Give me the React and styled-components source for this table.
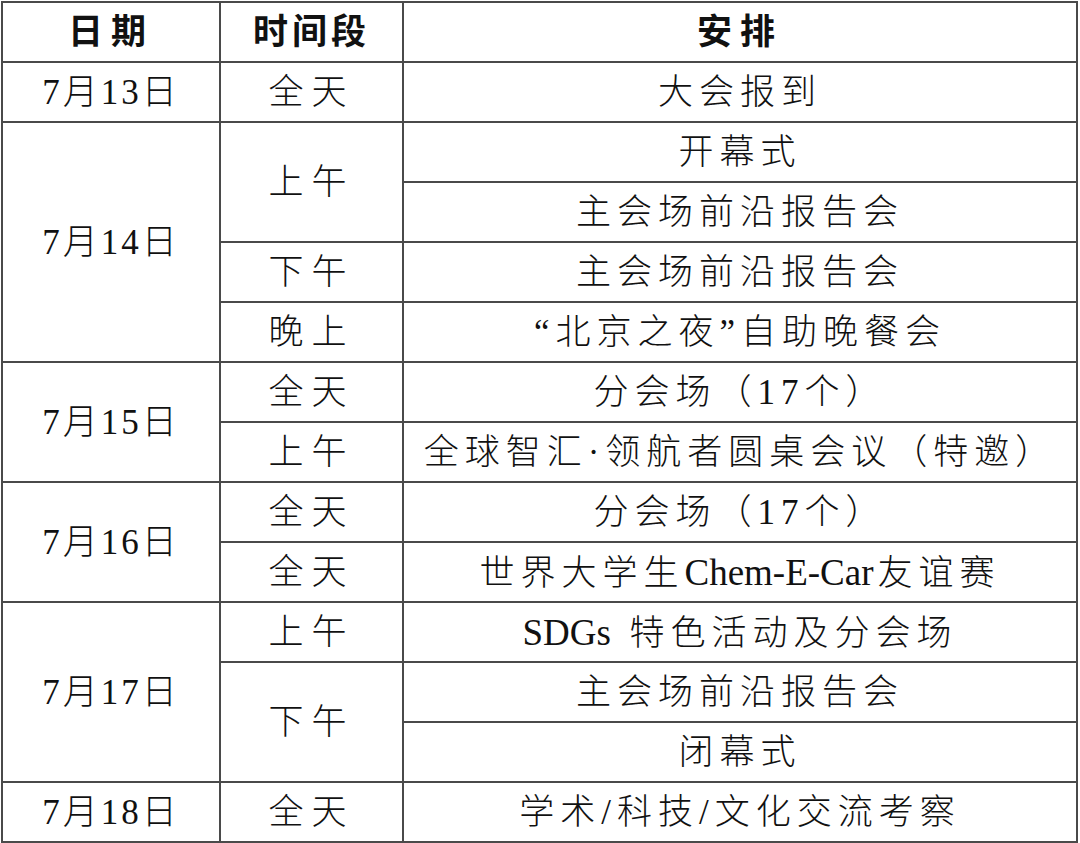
import React from 'react'
import styled, { createGlobalStyle } from 'styled-components'

const Global = createGlobalStyle`
    html, body {
        margin: 0;
        padding: 0;
        background: #ffffff;
    }
    body {
        font-family: "Liberation Serif", "Noto Sans CJK SC", serif;
        color: #111;
    }
`

const Page = styled.div`
    width: 1080px;
    height: 843px;
    padding: 1px 0 0 1px;
    box-sizing: border-box;
    overflow: hidden;
`

const Table = styled.table`
    border-collapse: collapse;
    width: 1077px;
    table-layout: fixed;
`

const Cell = styled.td`
    border: 2px solid #4a4a4a;
    height: 58px;
    padding: 0;
    text-align: center;
    vertical-align: middle;
    font-size: 35px;
    font-weight: 300;
    letter-spacing: ${p => p.$spacing || '6px'};
    line-height: 1;
    white-space: nowrap;
`

const Head = styled(Cell).attrs({ as: 'th' })`
    font-weight: 700;
    letter-spacing: ${p => p.$spacing || '8px'};
`

const Latin = styled.span`
    font-size: 37px;
    letter-spacing: 0;
    margin-right: 4px;
`

const schedule = [
    { date: '7月13日', slots: [{ time: '全天', items: ['大会报到'] }] },
    {
        date: '7月14日',
        slots: [
            { time: '上午', items: ['开幕式', '主会场前沿报告会'] },
            { time: '下午', items: ['主会场前沿报告会'] },
            { time: '晚上', items: ['“北京之夜”自助晚餐会'] },
        ],
    },
    {
        date: '7月15日',
        slots: [
            { time: '全天', items: ['分会场（17个）'] },
            { time: '上午', items: ['全球智汇·领航者圆桌会议（特邀）'] },
        ],
    },
    {
        date: '7月16日',
        slots: [
            { time: '全天', items: ['分会场（17个）'] },
            { time: '全天', items: ['世界大学生Chem-E-Car友谊赛'] },
        ],
    },
    {
        date: '7月17日',
        slots: [
            { time: '上午', items: ['SDGs 特色活动及分会场'] },
            { time: '下午', items: ['主会场前沿报告会', '闭幕式'] },
        ],
    },
    { date: '7月18日', slots: [{ time: '全天', items: ['学术/科技/文化交流考察'] }] },
]

// latin words are set tight, chinese gets the wide spacing
const renderText = (text) =>
    text.split(/([A-Za-z][A-Za-z\-]*)/).map((part, i) =>
        /^[A-Za-z]/.test(part) ? <Latin key={i}>{part}</Latin> : part
    )

function App() {
    const rows = []
    schedule.forEach((day, di) => {
        const total = day.slots.reduce((n, s) => n + s.items.length, 0)
        day.slots.forEach((slot, si) => {
            slot.items.forEach((item, ii) => {
                rows.push(
                    <tr key={`${di}-${si}-${ii}`}>
                        {si === 0 && ii === 0 && (
                            <Cell rowSpan={total} $spacing="3px">{day.date}</Cell>
                        )}
                        {ii === 0 && (
                            <Cell rowSpan={slot.items.length} $spacing="8px">{slot.time}</Cell>
                        )}
                        <Cell>{renderText(item)}</Cell>
                    </tr>
                )
            })
        })
    })

    return (
        <Page>
            <Global />
            <Table>
                <colgroup>
                    <col style={{ width: '218px' }} />
                    <col style={{ width: '183px' }} />
                    <col />
                </colgroup>
                <thead>
                    <tr>
                        <Head>日期</Head>
                        <Head $spacing="4px">时间段</Head>
                        <Head>安排</Head>
                    </tr>
                </thead>
                <tbody>{rows}</tbody>
            </Table>
        </Page>
    )
}

export default App
